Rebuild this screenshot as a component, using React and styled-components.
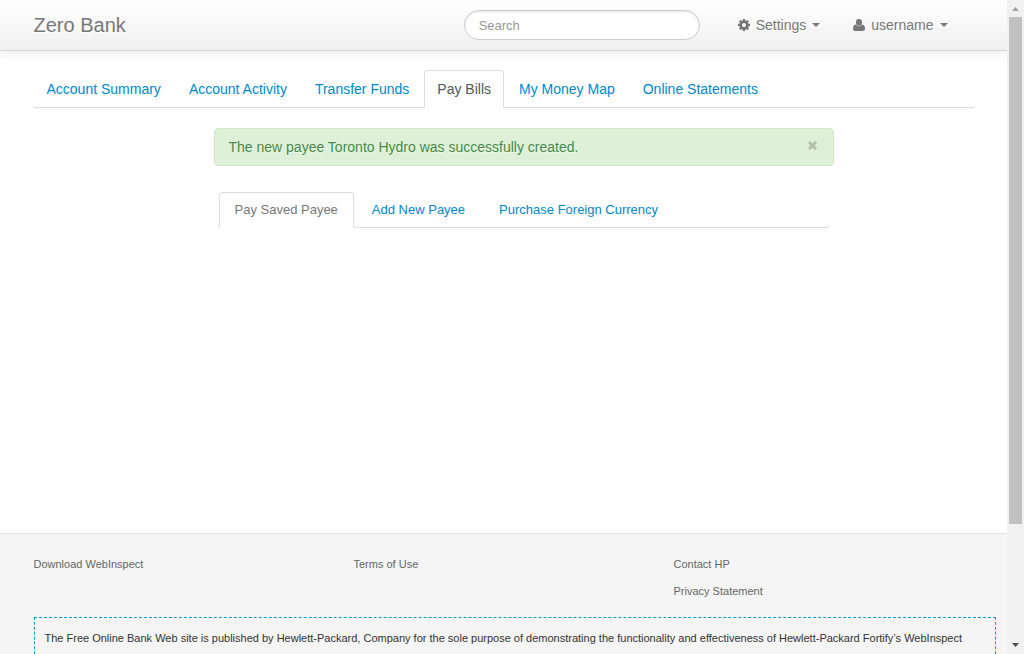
import React from "react";
import styled, { createGlobalStyle } from "styled-components";

const GlobalStyle = createGlobalStyle`
  * { box-sizing: border-box; }
  body {
    margin: 0;
    background: #fff;
    color: #333;
    font: 14px/20px "Liberation Sans", Arial, sans-serif;
  }
  a { text-decoration: none; }
`;

const Window = styled.div`
  display: flex;
  height: 100vh;
  overflow: hidden;
`;

const Page = styled.div`
  flex: 1;
  min-width: 0;
  overflow: hidden;
`;

const Container = styled.div`
  width: 100%;
  max-width: 940px;
  margin: 0 auto;
`;

const Navbar = styled.header`
  height: 51px;
  border-bottom: 1px solid #d4d4d4;
  background: linear-gradient(#ffffff, #f0f0f0);
  box-shadow: 0 1px 10px rgba(0, 0, 0, 0.1);
`;

const NavbarRow = styled(Container)`
  display: flex;
  align-items: center;
  height: 50px;
  padding-right: 26px;
`;

const Brand = styled.a`
  margin-right: auto;
  color: #777;
  font-size: 20px;
  text-shadow: 0 1px 0 #fff;
`;

const SearchInput = styled.input`
  width: 236px;
  height: 30px;
  margin-right: 38px;
  padding: 4px 14px;
  border: 1px solid #ccc;
  border-radius: 15px;
  background: #fff;
  box-shadow: inset 0 1px 2px rgba(0, 0, 0, 0.1);
  color: #555;
  font: 13px/20px "Liberation Sans", Arial, sans-serif;
  &::placeholder { color: #999; opacity: 1; }
`;

const UserNav = styled.nav`
  display: flex;
  gap: 33px;
`;

const MenuButton = styled.button`
  display: flex;
  align-items: center;
  padding: 0;
  border: 0;
  background: none;
  color: #777;
  font: inherit;
  text-shadow: 0 1px 0 #fff;
`;

const Glyph = styled.svg`
  width: 12px;
  height: 12px;
  margin-right: 6px;
  fill: currentColor;
`;

const Caret = styled.span`
  margin-left: 6px;
  border: 4px solid transparent;
  border-top-color: currentColor;
  border-bottom: 0;
`;

const Main = styled.main`
  min-height: 482px;
  padding-top: 19px;
`;

const TabBar = styled.nav`
  display: flex;
  gap: 2px;
  margin-bottom: 20px;
  border-bottom: 1px solid #ddd;
`;

const Tab = styled.a`
  margin-bottom: -1px;
  padding: 8px 12px;
  border: 1px solid ${(p) => (p.$active ? "#ddd" : "transparent")};
  border-bottom-color: ${(p) => (p.$active ? "#fff" : "transparent")};
  border-radius: 4px 4px 0 0;
  background: ${(p) => (p.$active ? "#fff" : "none")};
  color: ${(p) => (p.$active ? "#555" : "#0088cc")};
`;

const Content = styled.div`
  max-width: 620px;
  margin: 0 auto;
`;

const ContentColumn = styled(Container)`
  padding: 0 140px 0 180px;
`;

const Alert = styled.div`
  display: flex;
  justify-content: space-between;
  margin-bottom: 20px;
  padding: 8px 16px 8px 14px;
  border: 1px solid #d6e9c6;
  border-radius: 4px;
  background: #dff0d8;
  color: #468847;
  text-shadow: 0 1px 0 rgba(255, 255, 255, 0.5);
`;

const CloseButton = styled.button`
  display: flex;
  align-items: center;
  height: 16px;
  padding: 0;
  border: 0;
  background: none;
  color: #000;
  opacity: 0.2;
`;

const CloseGlyph = styled.svg`
  width: 9px;
  height: 9px;
  stroke: currentColor;
  stroke-width: 3;
`;

const PayeePanel = styled.section`
  padding: 6px 4px;
  background: #fefefe;
`;

const PayeeTabs = styled(TabBar)`
  margin-bottom: 0;
  padding-left: 1px;
  border-radius: 4px;
`;

const PayeeTab = styled(Tab)`
  padding: 7px 15px;
  color: ${(p) => (p.$active ? "#777" : "#0088cc")};
  font-size: 13px;
`;

const Footer = styled.footer`
  padding-top: 17px;
  border-top: 1px solid #e5e5e5;
  background: #f5f5f5;
  font-size: 11px;
`;

const FooterColumns = styled.div`
  display: grid;
  grid-template-columns: repeat(3, 1fr);
  gap: 20px;
`;

const FooterList = styled.ul`
  margin: 0 0 12px;
  padding: 0;
  list-style: none;
  line-height: 27px;
`;

const FooterLink = styled.a`
  color: #666;
`;

const Disclaimer = styled.p`
  margin: 0 -22px 0 0;
  padding: 10px;
  border: 1px dashed #0d95cf;
`;

const ScrollTrack = styled.div`
  display: flex;
  flex-direction: column;
  align-items: center;
  flex: none;
  width: 17px;
  background: #f1f1f1;
`;

const ScrollArrow = styled.svg`
  flex: none;
  width: 17px;
  height: 17px;
  fill: ${(p) => p.$color};
`;

const ScrollThumb = styled.div`
  flex: 507;
  width: 13px;
  background: #c1c1c1;
`;

const ScrollRest = styled.div`
  flex: 113;
`;

const mainTabs = ["Account Summary", "Account Activity", "Transfer Funds", "Pay Bills", "My Money Map", "Online Statements"];
const payeeTabs = ["Pay Saved Payee", "Add New Payee", "Purchase Foreign Currency"];
const footerLinks = [["Download WebInspect"], ["Terms of Use"], ["Contact HP", "Privacy Statement"]];

const CogIcon = () => (
  <Glyph viewBox="0 128 1536 1536" aria-hidden="true">
    <path d="M1024 896q0-106-75-181t-181-75-181 75-75 181 75 181 181 75 181-75 75-181zm512-109v222q0 12-8 23t-20 13l-185 28q-19 54-39 91 35 50 107 138 10 12 10 25t-9 23q-27 37-99 108t-94 71q-12 0-26-9l-138-108q-44 23-91 38-16 136-29 186-7 28-36 28h-222q-14 0-24.500-8.500t-11.500-21.500l-28-184q-49-16-90-37l-141 107q-10 9-25 9-14 0-25-11-126-114-165-168-7-10-7-23 0-12 8-23 15-21 51-66.500t54-70.500q-27-50-41-99l-183-27q-13-2-21-12.500t-8-23.500v-222q0-12 8-23t19-13l186-28q14-46 39-92-40-57-107-138-10-12-10-24 0-10 9-23 26-36 98.500-107.500t94.500-71.500q13 0 26 10l138 107q44-23 91-38 16-136 29-186 7-28 36-28h222q14 0 24.500 8.500t11.500 21.500l28 184q49 16 90 37l142-107q9-9 24-9 13 0 25 10 129 119 165 170 7 8 7 22 0 12-8 23-15 21-51 66.500t-54 70.500q26 50 41 98l183 28q13 2 21 12.500t8 23.500z" />
  </Glyph>
);

const UserIcon = () => (
  <Glyph viewBox="0 0 12 12" aria-hidden="true">
    <ellipse cx="6" cy="3.400" rx="3.100" ry="3.400" />
    <path d="M2.800 5.500C0.800 5.700 0 7.400 0 10C0 11.300 0.900 12 2 12H10C11.100 12 12 11.300 12 10C12 7.400 11.200 5.700 9.200 5.500C8.400 6.700 7.300 7.300 6 7.300S3.600 6.700 2.800 5.500Z" />
  </Glyph>
);

export default function App() {
  return (
    <>
      <GlobalStyle />
      <Window>
        <Page>
          <Navbar>
            <NavbarRow>
              <Brand href="#">Zero Bank</Brand>
              <SearchInput type="text" placeholder="Search" aria-label="Search" />
              <UserNav>
                <MenuButton type="button"><CogIcon />Settings<Caret /></MenuButton>
                <MenuButton type="button"><UserIcon />username<Caret /></MenuButton>
              </UserNav>
            </NavbarRow>
          </Navbar>
          <Main>
            <Container>
              <TabBar>
                {mainTabs.map((t) => <Tab key={t} href="#" $active={t === "Pay Bills"}>{t}</Tab>)}
              </TabBar>
            </Container>
            <ContentColumn>
              <Content>
                <Alert role="status">
                  <span>The new payee Toronto Hydro was successfully created.</span>
                  <CloseButton type="button" aria-label="Close">
                    <CloseGlyph viewBox="0 0 9 9" aria-hidden="true"><path d="M1 1L8 8M8 1L1 8" /></CloseGlyph>
                  </CloseButton>
                </Alert>
                <PayeePanel>
                  <PayeeTabs>
                    {payeeTabs.map((t) => <PayeeTab key={t} href="#" $active={t === "Pay Saved Payee"}>{t}</PayeeTab>)}
                  </PayeeTabs>
                </PayeePanel>
              </Content>
            </ContentColumn>
          </Main>
          <Footer>
            <Container>
              <FooterColumns>
                {footerLinks.map((links) => (
                  <FooterList key={links[0]}>
                    {links.map((l) => <li key={l}><FooterLink href="#">{l}</FooterLink></li>)}
                  </FooterList>
                ))}
              </FooterColumns>
              <Disclaimer>
                The Free Online Bank Web site is published by Hewlett-Packard, Company for the sole purpose of demonstrating the functionality and effectiveness of Hewlett-Packard Fortify’s WebInspect
              </Disclaimer>
            </Container>
          </Footer>
        </Page>
        <ScrollTrack aria-hidden="true">
          <ScrollArrow $color="#a3a3a3" viewBox="0 0 17 17"><path d="M5 11L8.500 7L12 11Z" /></ScrollArrow>
          <ScrollThumb />
          <ScrollRest />
          <ScrollArrow $color="#505050" viewBox="0 0 17 17"><path d="M5 6L8.500 10L12 6Z" /></ScrollArrow>
        </ScrollTrack>
      </Window>
    </>
  );
}
